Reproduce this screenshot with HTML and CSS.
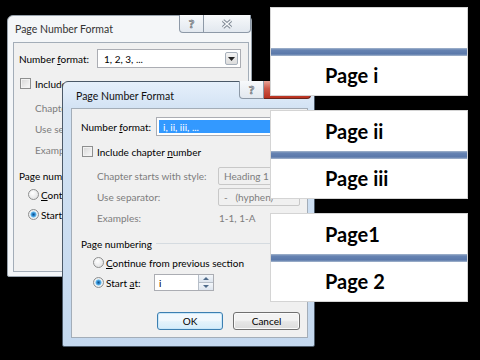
FILE: index.html
```html
<!DOCTYPE html>
<html lang="en">
<head>
    <meta charset="UTF-8">
    <title>Page Number Format</title>
    <link rel="stylesheet" href="styles.css">
</head>
<body>
    <div class="slide">
        <div class="dialog dialog-back">
            <div class="titlebar">
                <span class="title">Page Number Format</span>
                <div class="caption">
                    <span class="cbtn cbtn-help">?</span>
                    <span class="cbtn cbtn-close">
                        <svg width="12" height="10" viewBox="0 0 12 10"><path d="M2 1.5 L10 8.5 M10 1.5 L2 8.5" stroke="#7b8591" stroke-width="3.4"/><path d="M2 1.5 L10 8.5 M10 1.5 L2 8.5" stroke="#f6f8fa" stroke-width="1.6"/></svg>
                    </span>
                </div>
            </div>
            <div class="panel">
                <div class="row row-format">
                    <span class="label">Number <u>f</u>ormat:</span>
                    <div class="combo">
                        <span class="combo-text">1, 2, 3, ...</span>
                        <span class="combo-drop"><svg width="7" height="4" viewBox="0 0 7 4"><path d="M0 0 H7 L3.5 4 Z" fill="#222"/></svg></span>
                    </div>
                </div>
                <div class="row row-check"><span class="checkbox"></span><span>Include chapter <u>n</u>umber</span></div>
                <div class="row row-field disabled"><span class="sublabel">Chapter starts with style:</span><div class="field">Heading 1</div></div>
                <div class="row row-field disabled"><span class="sublabel">Use separator:</span><div class="field">-&nbsp;&nbsp;&nbsp;(hyphen)</div></div>
                <div class="row row-text disabled"><span class="sublabel">Examples:</span><span class="example">1-1, 1-A</span></div>
                <div class="row row-text group"><span>Page numbering</span><span class="group-line"></span></div>
                <div class="row row-text radio-row"><span class="radio"></span><span><u>C</u>ontinue from previous section</span></div>
                <div class="row row-spin radio-row"><span class="radio checked"></span><span class="start-label">Start <u>a</u>t:</span>
                    <div class="spin"><span class="spin-text">1</span><span class="spin-btns"><span class="spin-up"></span><span class="spin-down"></span></span></div>
                </div>
                <div class="buttons"><span class="btn btn-default">OK</span><span class="btn">Cancel</span></div>
            </div>
        </div>

        <div class="dialog dialog-front">
            <div class="titlebar">
                <span class="title">Page Number Format</span>
                <div class="caption">
                    <span class="cbtn cbtn-help">?</span>
                    <span class="cbtn cbtn-close">
                        <svg width="12" height="10" viewBox="0 0 12 10"><path d="M2 1.5 L10 8.5 M10 1.5 L2 8.5" stroke="#5b1b14" stroke-width="3.4"/><path d="M2 1.5 L10 8.5 M10 1.5 L2 8.5" stroke="#fff" stroke-width="1.6"/></svg>
                    </span>
                </div>
            </div>
            <div class="panel">
                <div class="row row-format">
                    <span class="label">Number <u>f</u>ormat:</span>
                    <div class="combo combo-selected">
                        <span class="combo-text">i, ii, iii, ...</span>
                        <span class="combo-drop"><svg width="7" height="4" viewBox="0 0 7 4"><path d="M0 0 H7 L3.5 4 Z" fill="#222"/></svg></span>
                    </div>
                </div>
                <div class="row row-check"><span class="checkbox"></span><span>Include chapter <u>n</u>umber</span></div>
                <div class="row row-field disabled"><span class="sublabel">Chapter starts with style:</span><div class="field">Heading 1</div></div>
                <div class="row row-field disabled"><span class="sublabel">Use separator:</span><div class="field">-&nbsp;&nbsp;&nbsp;(hyphen)</div></div>
                <div class="row row-text disabled"><span class="sublabel">Examples:</span><span class="example">1-1, 1-A</span></div>
                <div class="row row-text group"><span>Page numbering</span><span class="group-line"></span></div>
                <div class="row row-text radio-row"><span class="radio"></span><span><u>C</u>ontinue from previous section</span></div>
                <div class="row row-spin radio-row"><span class="radio checked"></span><span class="start-label">Start <u>a</u>t:</span>
                    <div class="spin"><span class="spin-text">i</span><span class="spin-btns"><span class="spin-up"></span><span class="spin-down"></span></span></div>
                </div>
                <div class="buttons"><span class="btn btn-default">OK</span><span class="btn">Cancel</span></div>
            </div>
        </div>

        <div class="pages">
            <div class="page"><div class="half"></div><div class="stripe"></div><div class="half">Page i</div></div>
            <div class="page"><div class="half">Page ii</div><div class="stripe"></div><div class="half">Page iii</div></div>
            <div class="page"><div class="half">Page1</div><div class="stripe"></div><div class="half">Page 2</div></div>
        </div>
    </div>
</body>
</html>
```

FILE: styles.css
```css
* {
    box-sizing: border-box;
    margin: 0;
    padding: 0;
}

body {
    background: #000;
    width: 480px;
    height: 360px;
    overflow: hidden;
    font-family: Lato, "Noto Sans", sans-serif;
    font-size: 10px;
    color: #000;
}

.slide {
    position: relative;
    width: 480px;
    height: 360px;
}

/* dialogs */
.dialog {
    position: absolute;
    display: flex;
    flex-direction: column;
    border: 1px solid #4b5968;
    border-radius: 6px 6px 2px 2px;
}

.dialog-back {
    left: 7px;
    top: 15px;
    width: 245px;
    height: 262px;
    background: #f4f6f8;
    border-color: #98a2ac;
    padding: 0 2px 4px 5px;
}

.dialog-front {
    left: 62px;
    top: 81px;
    width: 253px;
    height: 266px;
    background: linear-gradient(#e6f0fb, #d3e3f4 26px, #c4d8ee);
    padding: 0 6px 8px 8px;
}

.titlebar {
    height: 26px;
    display: flex;
    align-items: flex-start;
}

.title {
    flex: 1;
    font-size: 10.5px;
    line-height: 26px;
    color: #111;
}

.dialog-back .title {
    padding-left: 2px;
    color: #333;
}

.dialog-front .title {
    padding-left: 5px;
    line-height: 28px;
}

.caption {
    display: flex;
    margin-top: -1px;
}

.dialog-back .caption {
    margin-right: -2px;
}

.dialog-front .caption {
    margin-right: -3px;
}

.cbtn {
    height: 18px;
    display: flex;
    align-items: center;
    justify-content: center;
    border: 1px solid #8d99a7;
    border-top: none;
    background: linear-gradient(#f7f9fb, #e2e8ef);
}

.cbtn-help {
    width: 25px;
    border-radius: 0 0 0 4px;
    font-size: 12px;
    font-weight: 700;
    color: #fff;
    -webkit-text-stroke: 0.7px #555d66;
}

.cbtn-close {
    width: 47px;
    border-left: none;
    border-radius: 0 0 4px 0;
}

.dialog-front .cbtn-close {
    background: linear-gradient(#e9a598, #cd5848 45%, #b8301f);
    border-color: #6a251c;
}

.panel {
    flex: 1;
    background: #f0f0f0;
    border: 1px solid #a3adb8;
    padding: 8px 7px 0 9px;
    display: flex;
    flex-direction: column;
}

.dialog-back .panel {
    padding: 6px 7px 0 5px;
}

.row {
    display: flex;
    align-items: center;
    white-space: nowrap;
}

.row-format {
    height: 19px;
}

.label {
    width: 75px;
    flex: none;
}

.dialog-back .label {
    width: 78px;
}

.combo {
    flex: 1;
    height: 19px;
    display: flex;
    align-items: center;
    background: #fff;
    border: 1px solid #abadb3;
    padding: 2px;
}

.combo-text {
    flex: 1;
    height: 100%;
    display: flex;
    align-items: center;
    padding-left: 4px;
}

.combo-selected .combo-text {
    background: #3399ff;
    color: #fff;
}

.combo-drop {
    width: 13px;
    height: 13px;
    margin-left: 2px;
    border: 1px solid #a7b0bb;
    border-radius: 2px;
    background: linear-gradient(#f4f4f4, #dcdcdc);
    display: flex;
    align-items: center;
    justify-content: center;
}

.row-check {
    height: 13px;
    margin-top: 9px;
    padding-left: 1px;
}

.checkbox {
    width: 11px;
    height: 11px;
    margin-right: 4px;
    border: 1px solid #8e8f8f;
    background: linear-gradient(135deg, #d6d6d6, #fafafa);
    box-shadow: inset 0 0 0 1px #f2f2f2;
}

.row-field {
    height: 18px;
    margin-top: 9px;
}

.row-field + .row-field {
    margin-top: 3px;
}

.disabled {
    color: #7d7d7d;
}

.sublabel {
    width: 137px;
    flex: none;
    padding-left: 16px;
}

.field {
    flex: 1;
    height: 100%;
    display: flex;
    align-items: center;
    padding-left: 5px;
    border: 1px solid #c8c8c8;
    border-radius: 2px;
    background: #f0f0f0;
}

.row-text {
    height: 13px;
    margin-top: 5px;
}

.example {
    padding-left: 1px;
}

.group {
    margin-top: 13px;
}

.group-line {
    flex: 1;
    height: 1px;
    margin-left: 4px;
    background: #d5dbe0;
}

.radio-row {
    padding-left: 12px;
}

.dialog-back .radio-row {
    padding-left: 9px;
}

.radio-row + .radio-row {
    margin-top: 5px;
}

.row-text.radio-row {
    margin-top: 6px;
}

.radio {
    width: 11px;
    height: 11px;
    margin-right: 2px;
    border-radius: 50%;
    border: 1px solid #8e8f8f;
    background: radial-gradient(circle at 40% 35%, #ffffff, #dadbdc);
}

.radio.checked {
    background: radial-gradient(circle, #0f4f89 0, #2d8bd1 1.6px, #7cc6f2 2.8px, #f3f5f6 3.4px, #d9dadb 6px);
}

.row-spin {
    height: 17px;
}

.start-label {
    width: 48px;
    flex: none;
}

.spin {
    display: flex;
    height: 17px;
    border: 1px solid #abadb3;
    background: #fff;
}

.spin-text {
    width: 43px;
    display: flex;
    align-items: center;
    padding-left: 4px;
}

.spin-btns {
    width: 15px;
    display: flex;
    flex-direction: column;
    border-left: 1px solid #b6bec8;
}

.spin-up,
.spin-down {
    flex: 1;
    position: relative;
    background: linear-gradient(#f3f6fa, #dde5ee);
}

.spin-up {
    border-bottom: 1px solid #b6bec8;
}

.spin-up::after,
.spin-down::after {
    content: "";
    position: absolute;
    left: 4px;
    top: 2px;
    border-left: 3px solid transparent;
    border-right: 3px solid transparent;
}

.spin-up::after {
    border-bottom: 3px solid #4f6b8a;
}

.spin-down::after {
    border-top: 3px solid #4f6b8a;
}

.buttons {
    display: flex;
    justify-content: flex-end;
    gap: 10px;
    margin-top: 21px;
}

.btn {
    width: 67px;
    height: 18px;
    display: flex;
    align-items: center;
    justify-content: center;
    border: 1px solid #707070;
    border-radius: 3px;
    background: linear-gradient(#f3f3f3 45%, #e6e6e6 55%, #dcdcdc);
    box-shadow: inset 0 0 0 1px #fbfbfb;
}

.btn-default {
    width: 66px;
    border-color: #3c7fb1;
    background: linear-gradient(#f1f8fd 45%, #e3f2fb 55%, #d4ecfa);
    box-shadow: inset 0 0 0 1px #c9e7f9;
}

/* page strips */
.pages {
    position: absolute;
    left: 270px;
    top: 7px;
    width: 198px;
    display: flex;
    flex-direction: column;
    gap: 14px;
}

.page {
    height: 89px;
    background: #fff;
    border: 1px solid #d4d4d4;
    display: flex;
    flex-direction: column;
}

.half {
    flex: 1;
    display: flex;
    align-items: center;
    padding-left: 54px;
    font-family: Lato, "Open Sans", sans-serif;
    font-weight: 700;
    font-size: 20px;
    color: #000;
}

.stripe {
    height: 8px;
    background: linear-gradient(#a6b7cd, #6683b2 25%, #5a78aa 75%, #a9b9cf);
}
```
